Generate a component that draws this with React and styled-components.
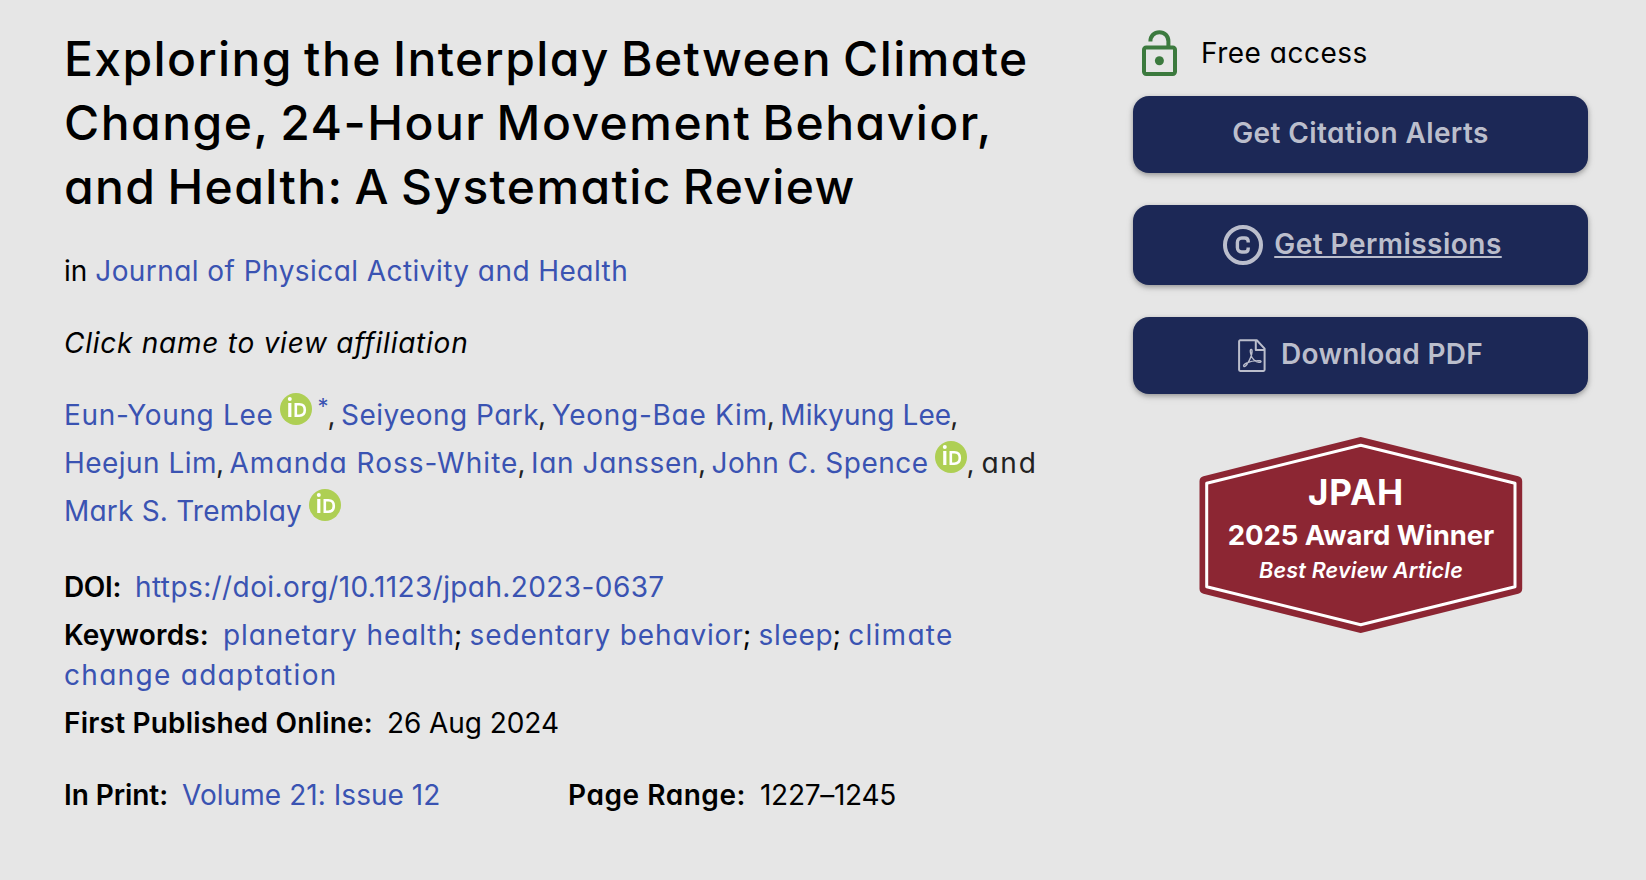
import React from 'react'
import styled, { createGlobalStyle } from 'styled-components'

const GlobalStyle = createGlobalStyle`
  body {
    margin: 0;
    background: #e6e6e6;
    color: #000;
    font-family: Inter, 'Open Sans', sans-serif;
    font-size: 28px;
    line-height: 40px;
    font-feature-settings: 'cv11';
  }
`

const Page = styled.main`
  display: grid;
  grid-template-columns: 980px 455px;
  column-gap: 89px;
  box-sizing: border-box;
  width: 1646px;
  height: 880px;
  padding: 27px 0 0 64px;
  overflow: hidden;
`

const Title = styled.h1`
  margin: 0 0 32px;
  font-size: 48px;
  font-weight: 500;
  line-height: 64px;
`

const TitleLine = styled.span`
  display: block;
  white-space: nowrap;
  word-spacing: -3px;
  letter-spacing: ${({ $track }) => $track}px;
`

const Paragraph = styled.p`
  margin: 0 0 32px;
`

const Hint = styled(Paragraph)`
  margin-bottom: 28px;
  font-style: italic;
  letter-spacing: 0.75px;
`

const Authors = styled.p`
  margin: 0 0 32px;
  line-height: 48px;
  color: #222;
`

const Link = styled.a`
  color: #3a53b2;
  text-decoration: none;
  letter-spacing: ${({ $track = 0 }) => $track}px;
`

const Separator = styled.span`
  margin-left: -1px;
  letter-spacing: ${({ $track = -1.2 }) => $track}px;
`

const Tracked = styled.span`
  letter-spacing: ${({ $track = 0 }) => $track}px;
`

const Footnote = styled.sup`
  margin: 0 0 0 5px;
  color: #3a53b2;
  font-size: 22px;
  line-height: 0;
  vertical-align: 11px;
`

const OrcidSvg = styled.svg`
  width: 32px;
  height: 32px;
  margin-left: 7px;
  vertical-align: baseline;
`

const Meta = styled.div`
  margin-bottom: 8px;
`

const Label = styled.span`
  margin-right: 14px;
  font-weight: 600;
  letter-spacing: ${({ $track = 0 }) => $track}px;
`

const PrintRow = styled.div`
  display: grid;
  grid-template-columns: 504px auto;
  margin-top: 32px;
`

const Sidebar = styled.aside`
  padding-top: 3px;
`

const Access = styled.div`
  display: flex;
  align-items: center;
  gap: 23px;
  height: 46px;
  margin-bottom: 20px;
  padding-left: 9px;
  letter-spacing: 0.5px;
`

const Button = styled.a`
  display: flex;
  align-items: center;
  justify-content: center;
  gap: ${({ $gap = 0 }) => $gap}px;
  box-sizing: border-box;
  height: ${({ $tall }) => ($tall ? 80 : 77)}px;
  margin-bottom: 32px;
  padding-left: ${({ $tall }) => ($tall ? 4 : 0)}px;
  border-radius: 16px;
  background: #1c2856;
  box-shadow: 0 2px 5px rgba(0, 0, 0, 0.3), 0 3px 10px rgba(0, 0, 0, 0.08);
  color: #bbbecc;
  font-weight: 600;
  cursor: pointer;
`

const ButtonText = styled.span`
  padding-bottom: 3px;
  letter-spacing: ${({ $track }) => $track}px;
  text-decoration: ${({ $underline }) => ($underline ? 'underline' : 'none')};
  text-decoration-thickness: 2px;
  text-underline-offset: 2px;
`

const Badge = styled.div`
  display: grid;
  width: 324px;
  height: 198px;
  margin: 42px 0 0 66px;
  color: #fff;
  text-align: center;
  white-space: nowrap;
  font-feature-settings: normal;

  > * {
    grid-area: 1 / 1;
  }
`

const BadgeText = styled.div`
  padding-top: 36px;
`

const BadgeName = styled.div`
  padding-right: 10px;
  font-size: 35px;
  font-weight: 700;
  letter-spacing: 0.9px;
`

const BadgeAward = styled.div`
  margin-top: 3px;
  font-size: 27.5px;
  font-weight: 700;
  letter-spacing: -0.05px;
`

const BadgeKind = styled.div`
  margin-top: -5px;
  font-size: 21.5px;
  font-style: italic;
  font-weight: 600;
  letter-spacing: 0.2px;
`

const Orcid = () => (
  <OrcidSvg viewBox='0 0 32 32'>
    <circle cx='16' cy='16' r='16' fill='#aecf54' />
    <circle cx='9.8' cy='5.9' r='2' fill='#fff' />
    <path d='M9.8 10v14' stroke='#fff' strokeWidth='3.2' />
    <path
      d='M15.8 11.3h3.4c3.4 0 5.6 2.1 5.6 5.7s-2.2 5.7-5.6 5.7h-3.4z'
      fill='none'
      stroke='#fff'
      strokeWidth='2.6'
    />
  </OrcidSvg>
)

const OpenLock = () => (
  <svg width='36' height='46' viewBox='0 0 36 46' fill='none'>
    <g stroke='#3c7a3e' strokeWidth='4'>
      <rect x='2' y='17.6' width='31' height='26.4' rx='2.2' />
      <path d='M8.4 11.4C8.4 6 12.2 2.2 17.4 2.2s9 3.8 9 9v6' />
    </g>
    <circle cx='17.4' cy='30.8' r='4.5' fill='#3c7a3e' />
  </svg>
)

const Copyright = () => (
  <svg width='40' height='40' viewBox='0 0 40 40' fill='none' stroke='#bbbecc'>
    <circle cx='20' cy='20' r='18' strokeWidth='4' />
    <path
      d='M25.2 17.4v-.8c0-2.200-1.400-3.600-3.600-3.600h-2.800c-2.600 0-4.400 1.800-4.400 4.400v5.200c0 2.600 1.800 4.400 4.400 4.400h2.800c2.200 0 3.600-1.400 3.600-3.600v-.8'
      strokeWidth='3.4'
    />
  </svg>
)

const PdfFile = () => (
  <svg
    width='28'
    height='34'
    viewBox='0 0 28 34'
    fill='none'
    stroke='#bbbecc'
    strokeWidth='2'
    strokeLinejoin='round'
  >
    <path d='M2.2 1.3h16.6l7.8 8.3v21.2c0 .7-.4 1.1-1.1 1.1H2.2c-.7 0-1.1-.4-1.1-1.1V2.4c0-.7.4-1.1 1.1-1.1z' />
    <path d='M17.8 1.8v9.1h8.5' />
    <path
      d='M13.2 10.5c-1 0-1 1.2-.7 3.1.4 3 1.4 5.6 3.5 7.5 1.9 1.8 4.3 2.5 6.3 2.1 1.2-.3.9-1.4-.6-1.5-5.2-.3-9.4.6-13.4 2.5-2.2 1.1-3.3 2.5-2.4 3.2.8.6 2.2-.8 3.7-3.1 2.4-3.8 4.1-7.9 4.4-11.2.1-1.7 0-2.6-.8-2.6z'
      strokeWidth='1.4'
    />
  </svg>
)

const Hexagon = () => (
  <svg width='324' height='198' viewBox='0 0 324 198' strokeLinejoin='round'>
    <path
      d='M161.7 6.2L318 45.2V152.8L161.7 191.8L5.7 152.8V45.2z'
      fill='#8c2633'
      stroke='#8c2633'
      strokeWidth='10.4'
    />
    <path
      d='M161.7 9.3L316 47.3V150.7L161.7 188.7L7.7 150.7V47.3z'
      fill='none'
      stroke='#fff'
      strokeWidth='3'
    />
  </svg>
)

const App = () => (
  <>
    <GlobalStyle />
    <Page>
      <article>
        <Title>
          <TitleLine $track={1.4}>Exploring the Interplay Between Climate</TitleLine>
          <TitleLine $track={1.48}>Change, 24-Hour Movement Behavior,</TitleLine>
          <TitleLine $track={1.37}>and Health: A Systematic Review</TitleLine>
        </Title>

        <Paragraph>
          in <Link $track={0.44}>Journal of Physical Activity and Health</Link>
        </Paragraph>

        <Hint>Click name to view affiliation</Hint>

        <Authors>
          <Link $track={0.66}>Eun-Young Lee</Link>
          <Orcid />
          <Footnote>*</Footnote>
          <Separator>, </Separator>
          <Link $track={0.45}>Seiyeong Park</Link>
          <Separator>, </Separator>
          <Link $track={0.72}>Yeong-Bae Kim</Link>
          <Separator>, </Separator>
          <Link $track={0.1}>Mikyung Lee</Link>
          <Separator>, </Separator>
          <Link $track={0.46}>Heejun Lim</Link>
          <Separator>, </Separator>
          <Link $track={1.04}>Amanda Ross-White</Link>
          <Separator>, </Separator>
          <Link $track={0.62}>Ian Janssen</Link>
          <Separator>, </Separator>
          <Link $track={0.46}>John C. Spence</Link>
          <Orcid />
          <Separator $track={-0.5}>, </Separator>
          <Tracked $track={1.8}>and</Tracked>{' '}
          <Link $track={0.2}>Mark S. Tremblay</Link>
          <Orcid />
        </Authors>

        <Meta>
          <Label $track={-0.35}>DOI:</Label>
          <Link $track={0.4}>https://doi.org/10.1123/jpah.2023-0637</Link>
        </Meta>
        <Meta>
          <Label $track={0.16}>Keywords:</Label>
          <Link $track={0.9}>planetary health</Link>
          <Separator $track={-0.3}>; </Separator>
          <Link $track={0.85}>sedentary behavior</Link>
          <Separator $track={-0.3}>; </Separator>
          <Link $track={0.73}>sleep</Link>
          <Separator $track={-0.3}>; </Separator>
          <Link $track={1.3}>climate change adaptation</Link>
        </Meta>
        <Meta>
          <Label $track={0.21}>First Published Online:</Label>
          <Tracked $track={-0.06}>26 Aug 2024</Tracked>
        </Meta>
        <PrintRow>
          <div>
            <Label $track={-0.07}>In Print:</Label>
            <Link $track={0.05}>Volume 21: Issue 12</Link>
          </div>
          <div>
            <Label $track={0.55}>Page Range:</Label>
            <Tracked $track={-0.28}>1227–1245</Tracked>
          </div>
        </PrintRow>
      </article>

      <Sidebar>
        <Access>
          <OpenLock />
          Free access
        </Access>
        <Button>
          <ButtonText $track={0.4}>Get Citation Alerts</ButtonText>
        </Button>
        <Button $tall $gap={11}>
          <Copyright />
          <ButtonText $track={0.47} $underline>
            Get Permissions
          </ButtonText>
        </Button>
        <Button $gap={15}>
          <PdfFile />
          <ButtonText $track={0.28}>Download PDF</ButtonText>
        </Button>
        <Badge>
          <Hexagon />
          <BadgeText>
            <BadgeName>JPAH</BadgeName>
            <BadgeAward>2025 Award Winner</BadgeAward>
            <BadgeKind>Best Review Article</BadgeKind>
          </BadgeText>
        </Badge>
      </Sidebar>
    </Page>
  </>
)

export default App
